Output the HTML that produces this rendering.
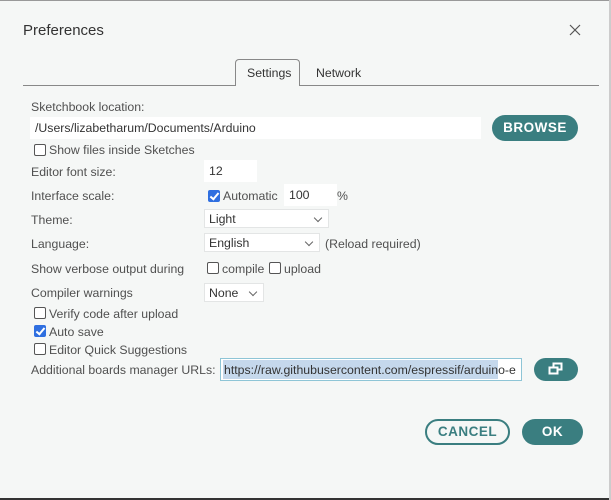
<!DOCTYPE html>
<html><head><meta charset="utf-8"><style>
*{box-sizing:border-box;margin:0;padding:0}
body{width:611px;height:500px;background:#f5f7f6;font-family:"Liberation Sans",Arial,sans-serif;font-size:12.3px;color:#505050;position:relative;overflow:hidden}
.a{position:absolute;white-space:nowrap}
.lbl{line-height:14px}
.inp{position:absolute;background:#fff;height:22px;line-height:22px;padding-left:5px;color:#333}
.sel{position:absolute;background:#fff;border:1px solid #e3e5e5;height:19px;line-height:19px;padding-left:4px;color:#333}
.sel:after{content:"";position:absolute;right:7px;top:5px;width:5px;height:5px;border-right:1px solid #666;border-bottom:1px solid #666;transform:rotate(45deg)}
.cb{position:absolute;width:12px;height:12px;border:1px solid #555;border-radius:2px;background:#fff}
.cbc{position:absolute;width:12px;height:12px;border-radius:2px;background:#2f6fe0}
.cbc:after{content:"";position:absolute;left:4px;top:1px;width:3px;height:7px;border-right:2px solid #fff;border-bottom:2px solid #fff;transform:rotate(40deg)}
.btn{position:absolute;background:#3a7e80;color:#fff;font-weight:bold;border-radius:13px;text-align:center;letter-spacing:.5px}
</style></head><body>
<div class="a" style="left:0;top:0;width:611px;height:1px;background:#999"></div>
<div class="a" style="left:0;top:498px;width:611px;height:2px;background:#333"></div>
<div class="a" style="left:609px;top:0;width:2px;height:500px;background:#ccc"></div>
<div class="a" style="left:23px;top:22px;font-size:15px;color:#333">Preferences</div>
<svg class="a" style="left:569px;top:24px" width="12" height="12"><path d="M1 1L11 11M11 1L1 11" stroke="#555" stroke-width="1.2"/></svg>
<div class="a" style="left:23px;top:85px;width:576px;height:1px;background:#888"></div>
<div class="a" style="left:235px;top:59px;width:65px;height:27px;border:1px solid #888;border-bottom:none;border-radius:4px 4px 0 0;background:#f5f7f6"></div>
<div class="a" style="left:247px;top:66px;color:#333">Settings</div>
<div class="a" style="left:316px;top:66px;color:#333">Network</div>
<div class="a lbl" style="left:31px;top:100px">Sketchbook location:</div>
<div class="inp" style="left:30px;top:117px;width:451px">/Users/lizabetharum/Documents/Arduino</div>
<div class="btn" style="left:492px;top:115px;width:86px;height:26px;line-height:26px;font-size:13.5px">BROWSE</div>
<div class="cb" style="left:34px;top:144px"></div><div class="a lbl" style="left:49px;top:143px">Show files inside Sketches</div>
<div class="a lbl" style="left:31px;top:165px">Editor font size:</div>
<div class="inp" style="left:204px;top:160px;width:53px">12</div>
<div class="a lbl" style="left:31px;top:189px">Interface scale:</div>
<div class="cbc" style="left:208px;top:190px"></div><div class="a lbl" style="left:223px;top:189px">Automatic</div>
<div class="inp" style="left:284px;top:184px;width:53px">100</div><div class="a lbl" style="left:337px;top:189px">%</div>
<div class="a lbl" style="left:31px;top:213px">Theme:</div>
<div class="sel" style="left:204px;top:209px;width:125px">Light</div>
<div class="a lbl" style="left:31px;top:237px">Language:</div>
<div class="sel" style="left:204px;top:233px;width:116px">English</div><div class="a lbl" style="left:325px;top:237px">(Reload required)</div>
<div class="a lbl" style="left:31px;top:262px">Show verbose output during</div>
<div class="cb" style="left:207px;top:262px"></div><div class="a lbl" style="left:222px;top:262px">compile</div>
<div class="cb" style="left:269px;top:262px"></div><div class="a lbl" style="left:284px;top:262px">upload</div>
<div class="a lbl" style="left:31px;top:286px">Compiler warnings</div>
<div class="sel" style="left:204px;top:283px;width:60px">None</div>
<div class="cb" style="left:34px;top:307px"></div><div class="a lbl" style="left:49px;top:307px">Verify code after upload</div>
<div class="cbc" style="left:34px;top:325px"></div><div class="a lbl" style="left:49px;top:325px">Auto save</div>
<div class="cb" style="left:34px;top:343px"></div><div class="a lbl" style="left:49px;top:343px">Editor Quick Suggestions</div>
<div class="a lbl" style="left:31px;top:363px">Additional boards manager URLs:</div>
<div class="a" style="left:220px;top:358px;width:302px;height:23px;background:#fff;border:1px solid #8ec5d6;overflow:hidden">
<div class="a" style="left:2px;top:1px;width:275px;height:19px;background:#c5d8ec"></div>
<div class="a lbl" style="left:3px;top:4px;color:#333">https://raw.githubusercontent.com/espressif/arduino-e</div></div>
<div class="btn" style="left:534px;top:358px;width:44px;height:23px"></div>
<svg class="a" style="left:548px;top:362px" width="16" height="14"><rect x="5.5" y="1.5" width="8" height="6" fill="none" stroke="#fff" stroke-width="2"/><rect x="1.5" y="5.5" width="8" height="6" fill="#3a7e80" stroke="#fff" stroke-width="2"/></svg>
<div class="a" style="left:425px;top:419px;width:85px;height:26px;border:2px solid #3a7e80;border-radius:13px;color:#3a7e80;font-weight:bold;text-align:center;line-height:22px;font-size:13.5px;letter-spacing:.5px">CANCEL</div>
<div class="btn" style="left:522px;top:419px;width:61px;height:26px;line-height:26px;font-size:13.5px">OK</div>
</body></html>
